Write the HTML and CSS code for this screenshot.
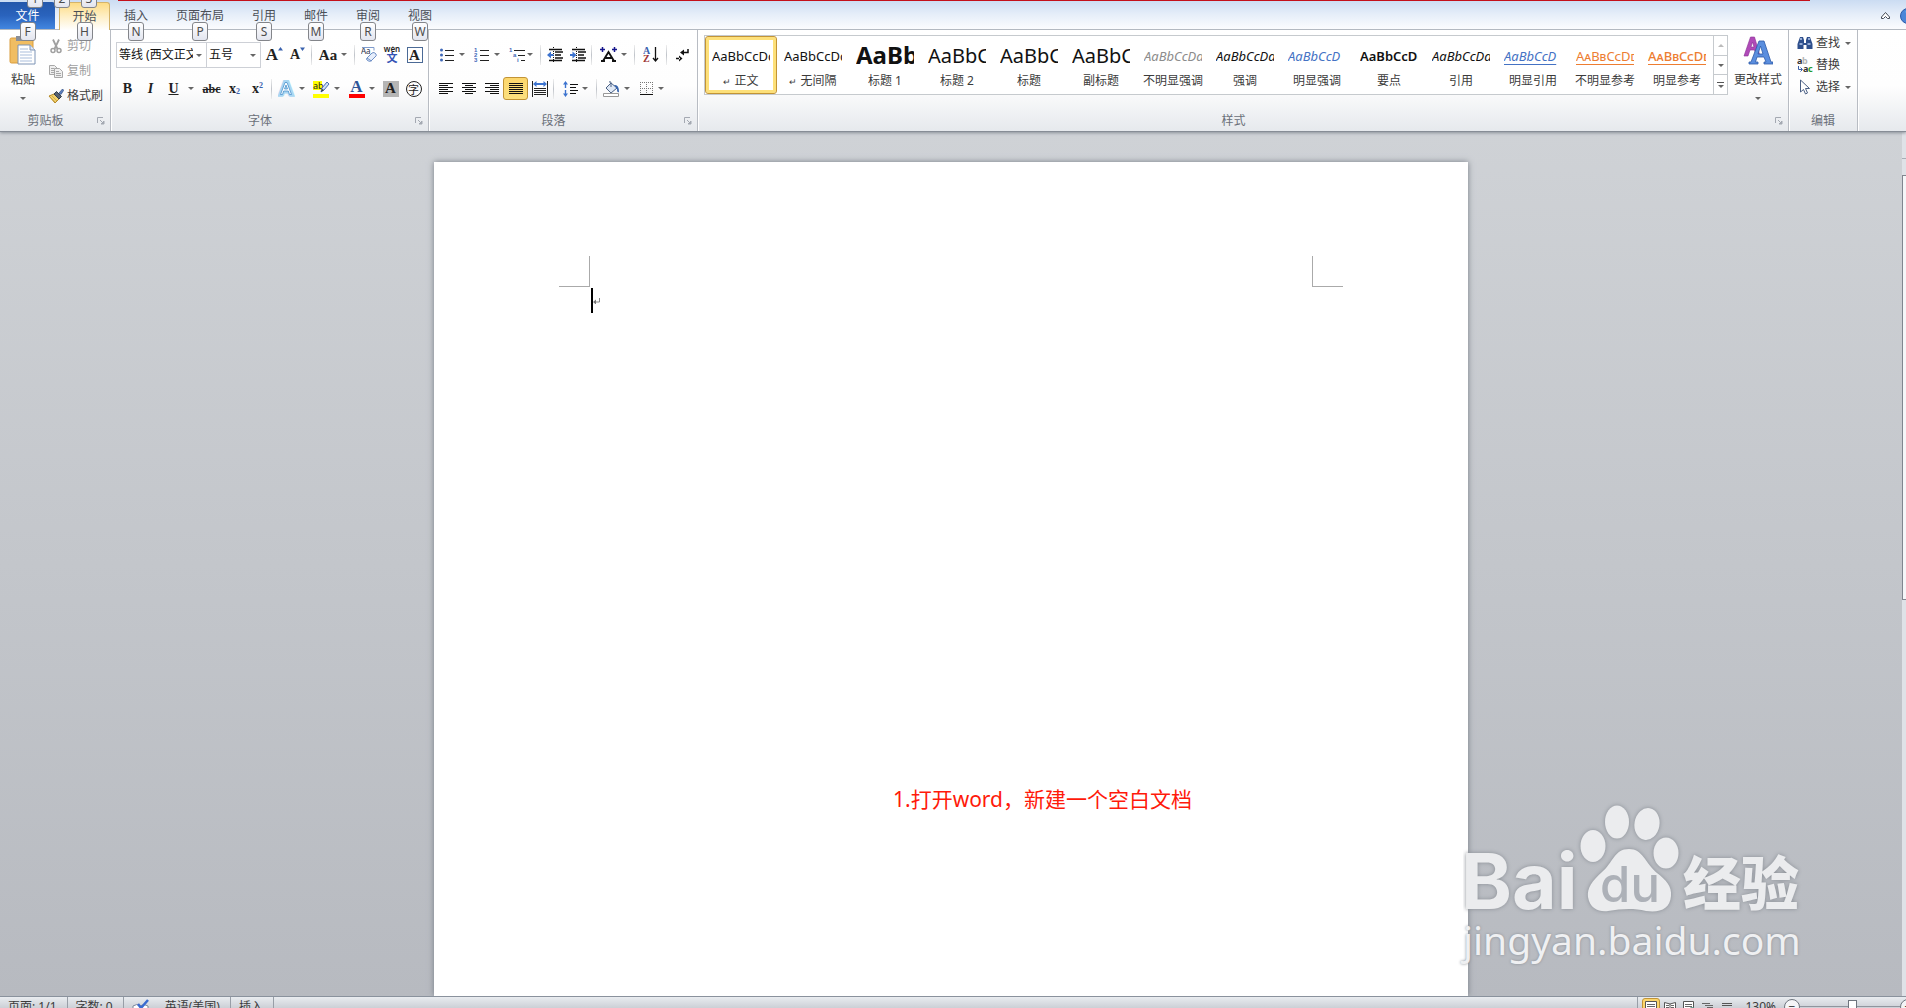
FILE: index.html
```html
<!DOCTYPE html>
<html lang="zh-CN">
<head>
    <meta charset="UTF-8">
    <meta name="viewport" content="width=device-width, initial-scale=1.0">
    <title>文档1 - Microsoft Word</title>
    <link rel="stylesheet" href="styles.css">
</head>
<body>
    <header class="tabs">
        <div class="red-line"></div>
        <div class="quick-keys"><kbd>1</kbd><kbd>2</kbd><kbd>3</kbd></div>
        <nav class="tab-list">
            <button class="tab file">文件<kbd>F</kbd></button>
            <button class="tab active">开始<kbd>H</kbd></button>
            <button class="tab">插入<kbd>N</kbd></button>
            <button class="tab">页面布局<kbd>P</kbd></button>
            <button class="tab">引用<kbd>S</kbd></button>
            <button class="tab">邮件<kbd>M</kbd></button>
            <button class="tab">审阅<kbd>R</kbd></button>
            <button class="tab">视图<kbd>W</kbd></button>
        </nav>
        <div class="window-tools">
            <button class="icon-btn" aria-label="收起功能区">
                <svg width="11" height="9" viewBox="0 0 11 9"><path d="M1.5 6 5.500 1.500 9.500 6v1.500H7.500L5.500 5.500 3.500 7.500h-2z" fill="#fff" stroke="#444a55"/></svg>
            </button>
            <button class="help" aria-label="帮助">?</button>
        </div>
    </header>

    <div class="ribbon">
        <!-- Буфер обмена -->
        <section class="group clipboard">
            <div class="group-body">
                <button class="big-btn">
                    <svg width="28" height="30" viewBox="0 0 28 30">
                        <rect x="1" y="2" width="23" height="25" rx="1.500" fill="#f0bd62" stroke="#d99c3c"/>
                        <path d="M7 0h11v5H7z" fill="#8a8f98"/>
                        <path d="M9 9h12l5 5v14H9z" fill="#fff" stroke="#7c93b5"/>
                        <path d="M21 9v5h5" fill="#dce6f4" stroke="#7c93b5"/>
                        <path d="M11 13h8M11 16h12M11 19h12M11 22h12M11 25h12" stroke="#a9bddb"/>
                    </svg>
                    <span>粘贴</span>
                    <i class="caret"></i>
                </button>
                <div class="stack clip-stack">
                    <button class="text-btn" disabled>
                        <svg width="16" height="16" viewBox="0 0 16 16" fill="none" stroke="#a0a0a0"><path d="M5 1.500 9.500 11M11 1.500 6.500 11" stroke-width="1.800"/><circle cx="5" cy="12.500" r="2" stroke-width="1.500"/><circle cx="11" cy="12.500" r="2" stroke-width="1.500"/></svg>
                        <span>剪切</span>
                    </button>
                    <button class="text-btn" disabled>
                        <svg width="16" height="16" viewBox="0 0 16 16" stroke="#a8a8a8"><path d="M1.500 2.500h5l3 3v6h-8z" fill="#efefef"/><path d="M3 5.500h3M3 7.500h4M3 9.500h4"/><path d="M6.500 5.500h5l3 3v6h-8z" fill="#efefef"/><path d="M8 8.500h3M8 10.500h5M8 12.500h5"/></svg>
                        <span>复制</span>
                    </button>
                    <button class="text-btn">
                        <svg width="16" height="16" viewBox="0 0 16 16"><path d="m1 8 5-2 5 5-4 4z" fill="#f2d16b" stroke="#b58a2a"/><path d="m2 9 5 5M4 8l5 5" stroke="#c79c36" stroke-width=".7"/><path d="m6 6 2.500-2.500 5 5L11 11z" fill="#56616f" stroke="#333d4a"/><path d="m11 5 3.500-4 1.200 1.200L13 6.500z" fill="#5b7fc0" stroke="#2e4a80" stroke-width=".7"/></svg>
                        <span>格式刷</span>
                    </button>
                </div>
            </div>
            <footer class="group-label"><span>剪贴板</span><button class="launcher" aria-label="剪贴板选项"><svg width="8" height="8" viewBox="0 0 8 8"><use href="#launch"/></svg></button></footer>
        </section>

        <!-- Шрифт -->
        <section class="group font">
            <div class="group-body rows">
                <div class="row">
                    <label class="combo name"><select aria-label="字体"><option>等线 (西文正文)</option></select></label>
                    <label class="combo size"><select aria-label="字号"><option>五号</option></select></label>
                    <button class="tool after-combo serif grow" aria-label="增大字体">A<svg width="5" height="4" viewBox="0 0 5 4"><path d="M0 3.500 2.500 0 5 3.500z" fill="#3a62ae"/></svg></button>
                    <button class="tool serif shrink" aria-label="缩小字体">A<svg width="5" height="4" viewBox="0 0 5 4"><path d="M0 .5 2.500 4 5 .5z" fill="#3a62ae"/></svg></button>
                    <i class="sep"></i>
                    <button class="tool split serif case">Aa<i class="caret"></i></button>
                    <i class="sep"></i>
                    <button class="tool" aria-label="清除格式"><svg width="16" height="16" viewBox="0 0 16 16"><text x="0" y="7" font-family="Noto Sans" font-size="8" fill="#26314a">Aa</text><path d="M1 .5h12v3" fill="none" stroke="#7f9bcb"/><path d="m6 11 5-5q2-1.500 4 1 1 2-1 3l-4 4q-2 1-4-1-1-1 0-2z" fill="#e6eefb" stroke="#6e8fc6"/><path d="m6 11 4.500 3" stroke="#6e8fc6"/></svg></button>
                    <button class="tool" aria-label="拼音指南"><svg width="18" height="17" viewBox="0 0 18 17"><text x="9" y="6" text-anchor="middle" font-family="Noto Sans" font-weight="600" font-size="8" fill="#222">wén</text><text x="9" y="16" text-anchor="middle" font-family="Noto Sans CJK SC" font-weight="700" font-size="11" fill="#3453b5">文</text></svg></button>
                    <button class="tool" aria-label="字符边框"><span class="char-border">A</span></button>
                </div>
                <div class="row">
                    <button class="tool serif"><b>B</b></button>
                    <button class="tool serif"><em>I</em></button>
                    <button class="tool split serif underline"><u>U</u><i class="caret"></i></button>
                    <button class="tool serif small"><s>abc</s></button>
                    <button class="tool serif script">x<sub>2</sub></button>
                    <button class="tool serif script">x<sup>2</sup></button>
                    <i class="sep"></i>
                    <button class="tool split" aria-label="文本效果"><svg width="17" height="18" viewBox="0 0 17 18"><text x="8" y="15" text-anchor="middle" font-family="Lato" font-weight="700" font-size="18" fill="#fff" stroke="#a9d6f2" stroke-width="3.500">A</text><path d="M2.500 14.500 7 2.500h2l4.500 12h-2L10.300 11H5.700l-1.200 3.500zM6.500 9h3L8 5z" fill="#fff" stroke="#4a90cc" stroke-width=".8"/></svg><i class="caret"></i></button>
                    <button class="tool split" aria-label="突出显示"><svg width="17" height="18" viewBox="0 0 17 18"><path d="M0 1h9v9H0zM0 14h16v4H0z" fill="#ffff00"/><text x="0" y="9" font-family="Noto Sans" font-size="9" fill="#222">ab</text><path d="m8 12 1-4 5-6 2 2-5 6z" fill="#cfe0f8" stroke="#4a6fb0"/><path d="m8 12 1-3 2 1z" fill="#333"/></svg><i class="caret"></i></button>
                    <button class="tool split" aria-label="字体颜色"><span class="font-color">A</span><i class="caret"></i></button>
                    <button class="tool" aria-label="字符底纹"><span class="char-shade">A</span></button>
                    <button class="tool" aria-label="带圈字符"><span class="char-circle">字</span></button>
                </div>
            </div>
            <footer class="group-label"><span>字体</span><button class="launcher" aria-label="字体选项"><svg width="8" height="8" viewBox="0 0 8 8"><use href="#launch"/></svg></button></footer>
        </section>

        <!-- Абзац -->
        <section class="group paragraph">
            <div class="group-body rows">
                <div class="row">
                    <button class="tool split wide" aria-label="项目符号"><svg width="16" height="16" viewBox="0 0 16 16"><g fill="#3f68b8"><circle cx="2.500" cy="3" r="1.500"/><circle cx="2.500" cy="8" r="1.500"/><circle cx="2.500" cy="13" r="1.500"/></g><path d="M6 3.500h9M6 8.500h9M6 13.500h9" stroke="#222"/></svg><i class="caret"></i></button>
                    <button class="tool split wide" aria-label="编号"><svg width="16" height="16" viewBox="0 0 16 16"><g font-family="Liberation Sans" font-weight="700" font-size="6" fill="#3f68b8"><text x="0" y="5">1</text><text x="0" y="10">2</text><text x="0" y="15">3</text></g><path d="M6 3.500h9M6 8.500h9M6 13.500h9" stroke="#222"/></svg><i class="caret"></i></button>
                    <button class="tool split wide multi" aria-label="多级列表"><svg width="17" height="16" viewBox="0 0 17 16"><g font-family="Liberation Sans" font-weight="700" font-size="6" fill="#3f68b8"><text x="0" y="5">1</text><text x="4" y="10">a</text><text x="8" y="15">i</text></g><path d="M5 3.500h11M9 8.500h7M12 13.500h4" stroke="#222"/></svg><i class="caret"></i></button>
                    <i class="sep"></i>
                    <button class="tool" aria-label="减少缩进"><svg width="16" height="16" viewBox="0 0 16 16"><path d="M2 2.500h13M8 5h8M8 8h6M8 11h8M2 13.500h13" stroke="#111" stroke-width="1.400"/><path d="M6.500 0v16" stroke="#111" stroke-dasharray="1 1"/><path d="m0 8 4-3.500v2.500h2.500v2H4v2.500z" fill="#3c73cf"/></svg></button>
                    <button class="tool" aria-label="增加缩进"><svg width="16" height="16" viewBox="0 0 16 16"><path d="M2 2.500h13M8 5h8M8 8h6M8 11h8M2 13.500h13" stroke="#111" stroke-width="1.400"/><path d="M6.500 0v16" stroke="#111" stroke-dasharray="1 1"/><path d="M6.500 8 2.500 4.500v2.500H0v2h2.500v2.500z" fill="#3c73cf"/></svg></button>
                    <i class="sep"></i>
                    <button class="tool split asian" aria-label="中文版式"><svg width="17" height="16" viewBox="0 0 17 16"><path d="M1 14h4M12 14h4M3 14 8.500 5 14 14M5.500 11h6" fill="none" stroke="#111" stroke-width="1.800"/><path d="M0 2.500h5M2.500 0v5M12 2.500h5M14.500 0v5" stroke="#16168c" stroke-width="1.500"/></svg><i class="caret"></i></button>
                    <i class="sep"></i>
                    <button class="tool sort" aria-label="排序"><svg width="16" height="17" viewBox="0 0 16 17"><g font-family="Liberation Serif" font-weight="700" font-size="10"><text x="0" y="8" fill="#3a62ae">A</text><text x="0" y="16" fill="#9d3434">Z</text></g><path d="M12.500 1v14M10 12l2.500 3 2.500-3" fill="none" stroke="#111" stroke-width="1.300"/></svg></button>
                    <i class="sep"></i>
                    <button class="tool mark" aria-label="显示标记"><svg width="14" height="16" viewBox="0 0 14 16"><path d="M12 2v3.500H7" fill="none" stroke="#111" stroke-width="1.500"/><path d="m4 5.500 4-3v6zM6.500 11.500 3 8.500v6zM0 10.800h4v1.500H0z" fill="#111"/></svg></button>
                </div>
                <div class="row">
                    <button class="tool" aria-label="左对齐"><svg width="14" height="14" viewBox="0 0 14 14"><path d="M0 1.500h14M0 3.500h9M0 5.500h14M0 7.500h9M0 9.500h14M0 11.500h9" stroke="#111"/></svg></button>
                    <button class="tool" aria-label="居中"><svg width="14" height="14" viewBox="0 0 14 14"><path d="M0 1.500h14M3 3.500h8M0 5.500h14M3 7.500h8M0 9.500h14M3 11.500h8" stroke="#111"/></svg></button>
                    <button class="tool" aria-label="右对齐"><svg width="14" height="14" viewBox="0 0 14 14"><path d="M0 1.500h14M5 3.500h9M0 5.500h14M5 7.500h9M0 9.500h14M5 11.500h9" stroke="#111"/></svg></button>
                    <button class="tool pressed" aria-label="两端对齐"><svg width="14" height="14" viewBox="0 0 14 14"><path d="M0 1.500h14M0 3.500h14M0 5.500h14M0 7.500h14M0 9.500h14M0 11.500h14" stroke="#111"/></svg></button>
                    <button class="tool" aria-label="分散对齐"><svg width="16" height="16" viewBox="0 0 16 16"><path d="M.5 0v16M15.500 0v16M2 7.500h12M2 9.500h12M2 11.500h12M2 13.500h12" stroke="#222"/><path d="m1 3 3.500-3v2h7V0L15 3l-3.500 3V4h-7v2z" fill="#3c73cf"/></svg></button>
                    <i class="sep"></i>
                    <button class="tool split spacing" aria-label="行距"><svg width="16" height="16" viewBox="0 0 16 16"><path d="M7 3.500h8M7 6.500h6M7 9.500h8M7 12.500h6" stroke="#111"/><path d="m2.500 0 2.500 3.500H3.200V7H1.800V3.500H0zM2.500 16 0 12.500h1.800V9h1.400v3.500H5z" fill="#3c73cf"/></svg><i class="caret"></i></button>
                    <i class="sep"></i>
                    <button class="tool split" aria-label="底纹"><svg width="17" height="16" viewBox="0 0 17 16"><path d="m3 7 5-5 6 5-6 5z" fill="#dfe8f5" stroke="#4c6285"/><path d="M8 6V2q0-2-2-1" fill="none" stroke="#4c6285"/><path d="M11 4q5-1 5 7-2 1-2-3z" fill="#3563ad"/><path d="M.5 12.500h15v3H.5z" fill="#fff" stroke="#999"/></svg><i class="caret"></i></button>
                    <button class="tool split" aria-label="边框"><svg width="14" height="14" viewBox="0 0 14 14"><path d="M.5 0v13M6.500 0v13M12.500 0v13M0 .5h13M0 6.500h13" stroke="#777" stroke-dasharray="1 1"/><path d="M0 12.500h13" stroke="#111"/></svg><i class="caret"></i></button>
                </div>
            </div>
            <footer class="group-label"><span>段落</span><button class="launcher" aria-label="段落选项"><svg width="8" height="8" viewBox="0 0 8 8"><use href="#launch"/></svg></button></footer>
        </section>

        <!-- Стили -->
        <section class="group styles">
            <div class="group-body">
                <div class="gallery">
                    <button class="style selected"><span class="sample">AaBbCcDd</span><span class="name"><small>↵</small> 正文</span></button>
                    <button class="style"><span class="sample">AaBbCcDd</span><span class="name"><small>↵</small> 无间隔</span></button>
                    <button class="style"><span class="sample h1">AaBb</span><span class="name">标题 1</span></button>
                    <button class="style"><span class="sample h2">AaBbC</span><span class="name">标题 2</span></button>
                    <button class="style"><span class="sample h2">AaBbC</span><span class="name">标题</span></button>
                    <button class="style"><span class="sample h2">AaBbC</span><span class="name">副标题</span></button>
                    <button class="style"><span class="sample italic gray">AaBbCcDd</span><span class="name">不明显强调</span></button>
                    <button class="style"><span class="sample italic">AaBbCcDd</span><span class="name">强调</span></button>
                    <button class="style"><span class="sample italic blue">AaBbCcD</span><span class="name">明显强调</span></button>
                    <button class="style"><span class="sample strong">AaBbCcDd</span><span class="name">要点</span></button>
                    <button class="style"><span class="sample italic">AaBbCcDd</span><span class="name">引用</span></button>
                    <button class="style"><span class="sample italic blue lined">AaBbCcD</span><span class="name">明显引用</span></button>
                    <button class="style"><span class="sample caps lined">AaBbCcDd</span><span class="name">不明显参考</span></button>
                    <button class="style"><span class="sample caps lined heavy">AaBbCcDd</span><span class="name">明显参考</span></button>
                    <div class="gallery-scroll">
                        <button class="dim" aria-label="上一行"><i class="caret up"></i></button>
                        <button aria-label="下一行"><i class="caret"></i></button>
                        <button class="more" aria-label="更多"><i class="caret"></i></button>
                    </div>
                </div>
                <button class="big-btn change">
                    <svg width="30" height="30" viewBox="0 0 30 30">
                        <path d="M1 20 7.500 1h4L17 20h-3.500l-2-6H7l-2 6zM8 11h3L9.500 6z" fill="#b04ab8" stroke="#8a2f94" stroke-width=".6"/>
                        <path d="M6 28v-2h2L16 5h5l7 21h2v2h-9v-2h2l-2-5h-7l-1.500 5H15v2zM15 18h5l-2.500-8z" fill="#5a8ede" stroke="#2d5ba8" stroke-width=".8"/>
                    </svg>
                    <span>更改样式</span>
                    <i class="caret"></i>
                </button>
            </div>
            <footer class="group-label"><span>样式</span><button class="launcher" aria-label="样式选项"><svg width="8" height="8" viewBox="0 0 8 8"><use href="#launch"/></svg></button></footer>
        </section>

        <!-- Правка -->
        <section class="group edit">
            <div class="group-body">
                <div class="stack edit-stack">
                    <button class="text-btn">
                        <svg width="16" height="16" viewBox="0 0 16 16"><path d="M3 2h3l1 3v3h2V5l1-3h3l2.500 7v5h-6v-4h-3v4h-6V9z" fill="#2e4f8c"/><path d="M2.500 9h3M10.500 9h3M4 3v2M12 3v2" stroke="#b9cdf0" stroke-width="1.500"/></svg>
                        <span>查找</span><i class="caret"></i>
                    </button>
                    <button class="text-btn">
                        <svg width="16" height="16" viewBox="0 0 16 16"><g font-family="Noto Sans" font-weight="700" font-size="9"><text x="0" y="7" fill="#333">a</text><text x="5" y="7" fill="#b5b5b5">b</text><text x="6" y="15" fill="#333">a</text><text x="11" y="15" fill="#239a2c">c</text></g><path d="M1.500 9v3.500H5M3.500 10.500l2 2-2 2" fill="none" stroke="#3a5fa8"/></svg>
                        <span>替换</span>
                    </button>
                    <button class="text-btn">
                        <svg width="16" height="16" viewBox="0 0 16 16"><path d="M3.500 1v12l3-2.500 2 4.500 2-1-2-4.500h4z" fill="#fff" stroke="#4a5f84"/></svg>
                        <span>选择</span><i class="caret"></i>
                    </button>
                </div>
            </div>
            <footer class="group-label"><span>编辑</span></footer>
        </section>
    </div>

    <div class="workspace">
        <main class="desk">
            <article class="page">
                <div class="margins"><i class="corner left"></i><i class="corner right"></i></div>
                <div class="line"><i class="cursor"></i><svg width="7" height="6" viewBox="0 0 7 6"><path d="M6.500 0v4H2" fill="none" stroke="#888"/><path d="M0 4 3 1.500v5z" fill="#777"/></svg></div>
                <p class="note">1.打开word，新建一个空白文档</p>
            </article>
            <div class="watermark">
                <svg width="350" height="115" viewBox="0 0 350 115">
                    <g class="mark-shape">
                        <text x="-2" y="109" font-family="Inter" font-weight="700" font-size="77">Bai</text>
                        <ellipse cx="130" cy="46" rx="12.500" ry="16"/>
                        <ellipse cx="154" cy="22" rx="12" ry="16.500"/>
                        <ellipse cx="184" cy="24" rx="12.500" ry="16" transform="rotate(10 184 24)"/>
                        <ellipse cx="203" cy="53" rx="12.500" ry="15.500"/>
                        <path d="M166 49c-15 0-16 14-27 23-10 9-15 16-14 25 2 12 11 15 20 14 13-2 25-3 38 0 14 2 24-2 25-15 1-10-5-16-14-23-12-10-14-24-28-24z"/>
                        <text x="220" y="105" font-family="Noto Sans CJK SC" font-weight="900" font-size="58">经验</text>
                    </g>
                    <text class="mark-du" x="167" y="102" text-anchor="middle" font-family="Inter" font-weight="500" font-size="49">du</text>
                </svg>
                <div class="mark-url">jingyan.baidu.com</div>
            </div>
        </main>
        <div class="scrollbar"><i class="split-box"></i><i class="thumb"></i></div>
    </div>

    <footer class="status">
        <div class="status-inner">
            <span class="cell">页面: 1/1</span>
            <span class="cell">字数: 0</span>
            <span class="cell proof">
                <svg width="18" height="16" viewBox="0 0 18 16"><path d="M1 7q4-3 7 0 4-3 8 0v7q-4-2-8 0-3-2-7 0z" fill="#fff" stroke="#7a869a"/><path d="m6 5 3 4 7-8" fill="none" stroke="#3a6bd0" stroke-width="2.500"/></svg>
                <span>英语(美国)</span>
            </span>
            <span class="cell">插入</span>
            <div class="views">
                <button class="view on" aria-label="页面视图"><svg width="12" height="12" viewBox="0 0 12 12"><path d="M.5.5h11v11H.5z" fill="#fff" stroke="#555"/><path d="M2 3.500h8M2 5.500h8M2 7.500h8M2 9.500h8" stroke="#666"/></svg></button>
                <button class="view" aria-label="阅读版式"><svg width="12" height="12" viewBox="0 0 12 12"><path d="M.5 1.500 6 3l5.500-1.500v9L6 11.500.5 10.500zM6 3v8" fill="#fff" stroke="#555"/><path d="M2 4.500h3M7 4.500h3M2 6.500h3M7 6.500h3" stroke="#666"/></svg></button>
                <button class="view" aria-label="Web 版式"><svg width="12" height="12" viewBox="0 0 12 12"><path d="M.5.500h10v10H.5z" fill="#fff" stroke="#555"/><path d="M2 3.500h7M2 5.500h7M2 7.500h4" stroke="#666"/><circle cx="9" cy="8.500" r="2.500" fill="#5f9a8c"/></svg></button>
                <button class="view" aria-label="大纲"><svg width="12" height="12" viewBox="0 0 12 12"><path d="M0 2.500h8M3 4.500h8M5 6.500h6M5 8.500h6" stroke="#666"/></svg></button>
                <button class="view" aria-label="草稿"><svg width="12" height="12" viewBox="0 0 12 12"><path d="M1 2.500h10M1 4.500h10M1 7.500h10M1 9.500h10" stroke="#555"/></svg></button>
            </div>
            <div class="zoom">
                <span>130%</span>
                <button class="round" aria-label="缩小">−</button>
                <input type="range" min="0" max="100" value="53" aria-label="缩放">
                <button class="round" aria-label="放大">+</button>
            </div>
        </div>
    </footer>

    <svg class="defs" width="0" height="0">
        <symbol id="launch" viewBox="0 0 8 8"><path d="M.5 6V.5H6" fill="none" stroke="#a4a9b2"/><path d="M3 3l2.500 2.500M7 4v3H4z" fill="#a4a9b2" stroke="#a4a9b2"/></symbol>
    </svg>
</body>
</html>
```
FILE: styles.css
```css
* {
    box-sizing: border-box;
}

body {
    display: flex;
    flex-direction: column;
    height: 100vh;
    margin: 0;
    overflow: hidden;
    font-family: "Noto Sans", "Noto Sans CJK SC", sans-serif;
    font-size: 12px;
    line-height: 16px;
    color: #3b3b3b;
}

button,
select {
    font: inherit;
    color: inherit;
    background: none;
    border: none;
    padding: 0;
    margin: 0;
}

svg {
    display: block;
    flex: none;
}

.defs {
    position: absolute;
}

.caret {
    flex: none;
    width: 0;
    height: 0;
    border: 3px solid transparent;
    border-top-color: #666;
    border-bottom-width: 0;
}

.caret.up {
    border-top-width: 0;
    border-bottom: 3px solid #bbb;
}

/* Вкладки */
.tabs {
    position: relative;
    z-index: 2;
    flex: none;
    display: flex;
    height: 30px;
    border-bottom: 1px solid #b3b9c1;
    background: linear-gradient(180deg, #cbdcf2, #e6eef9 50%, #fbfcfe);
}

.red-line {
    position: absolute;
    top: 0;
    left: 118px;
    right: 96px;
    height: 1px;
    background: #c4101a;
}

kbd {
    position: absolute;
    z-index: 2;
    width: 16px;
    height: 19px;
    border: 1px solid #83858a;
    border-radius: 3px;
    background: linear-gradient(180deg, #fff, #e3e5ef);
    color: #4c4c4c;
    font-family: "Noto Sans", sans-serif;
    font-size: 12px;
    line-height: 17px;
    text-align: center;
}

.quick-keys kbd {
    top: -11px;
    left: 27px;
}

.quick-keys kbd:nth-child(2) {
    left: 54px;
}

.quick-keys kbd:nth-child(3) {
    left: 81px;
}

.tab-list {
    display: flex;
    padding-top: 2px;
}

.tab {
    position: relative;
    height: 27px;
    padding: 0 14px;
    color: #4a4f57;
}

.tab kbd {
    top: 20px;
    left: calc(50% - 8px);
}

.tab.file {
    width: 55px;
    margin-right: 4px;
    border-radius: 0 3px 0 0;
    background: linear-gradient(180deg, #2458ab, #2a63bd 50%, #4286e0);
    color: #fff;
}

.tab.active {
    width: 51px;
    height: 28px;
    padding: 0;
    border: 1px solid #d5b46a;
    border-bottom: none;
    border-radius: 3px 3px 0 0;
    background: linear-gradient(180deg, #fddc86, #feefc6 50%, #fff);
}

.tab.active kbd {
    top: 19px;
}

.window-tools {
    display: flex;
    align-items: center;
    gap: 9px;
    margin-left: auto;
    margin-right: -10px;
    padding-top: 2px;
}

.help {
    width: 16px;
    height: 16px;
    border: 1px solid #2c5ba8;
    border-radius: 50%;
    background: #4c86d8;
    color: #fff;
    line-height: 14px;
}

/* Лента */
.ribbon {
    position: relative;
    z-index: 1;
    flex: none;
    display: flex;
    height: 102px;
    border-bottom: 1px solid #878d96;
    background: linear-gradient(180deg, #fff, #fefefe 55%, #e6e9ed);
    box-shadow: 0 1px 3px #8a9099;
}

.group {
    display: flex;
    flex-direction: column;
    border-right: 1px solid #b8bcc3;
    box-shadow: 1px 0 #fff;
}

.clipboard {
    width: 111px;
}

.font {
    width: 318px;
}

.paragraph {
    width: 269px;
}

.styles {
    flex: 1;
    min-width: 0;
}

.edit {
    width: 69px;
    margin-right: 48px;
}

.group-body {
    flex: 1;
    display: flex;
}

.group-label {
    display: flex;
    align-items: center;
    height: 20px;
    color: #6a7079;
    text-align: center;
}

.group-label span {
    flex: 1;
}

.launcher {
    width: 19px;
    padding-left: 6px;
}

.big-btn {
    display: flex;
    flex-direction: column;
    align-items: center;
    gap: 6px;
    width: 42px;
    padding: 6px 0 0 4px;
}

.big-btn .caret {
    margin-top: 3px;
}

.stack {
    display: flex;
    flex-direction: column;
}

.clip-stack {
    gap: 9px;
    padding: 8px 0 0 6px;
}

.edit-stack {
    gap: 6px;
    padding: 5px 0 0 8px;
}

.text-btn {
    display: flex;
    align-items: center;
    gap: 3px;
    height: 16px;
}

.text-btn .caret {
    margin-left: 2px;
}

.text-btn:disabled {
    color: #a0a0a0;
}

.rows {
    flex-direction: column;
    gap: 9px;
    padding: 12px 0 0 5px;
}

.row {
    display: flex;
    align-items: center;
    height: 25px;
}

.combo {
    position: relative;
    height: 26px;
    border: 1px solid #cdd0d6;
    background: #fff;
}

.combo::after {
    content: "";
    position: absolute;
    top: 11px;
    right: 4px;
    border: 3px solid transparent;
    border-top-color: #666;
    border-bottom-width: 0;
}

.combo select {
    appearance: none;
    width: 100%;
    height: 24px;
    padding: 0 13px 0 2px;
    color: #111;
    overflow: hidden;
}

.combo.name {
    width: 91px;
}

.combo.size {
    width: 54px;
    border-left: none;
}

.tool {
    display: flex;
    align-items: center;
    justify-content: center;
    width: 23px;
    height: 23px;
    color: #222;
}

.tool.split {
    width: 35px;
    gap: 4px;
}

.sep {
    flex: none;
    width: 1px;
    height: 20px;
    margin: 0 2px;
    background: linear-gradient(180deg, #eee, #c0c4ca, #eee);
}

.serif {
    font-family: "Liberation Serif", serif;
    font-weight: 700;
    font-size: 14px;
}

.after-combo {
    margin-left: 2px;
}

.grow {
    font-size: 17px;
}

.grow svg,
.shrink svg {
    align-self: flex-start;
    margin-top: 4px;
}

.tool.case {
    width: 38px;
    font-size: 15px;
}

.tool.underline {
    width: 38px;
    gap: 9px;
}

.small {
    font-size: 12px;
}

.script sub,
.script sup {
    font-size: 8px;
    line-height: 8px;
    color: #3a62ae;
}

.script sub {
    padding-top: 6px;
}

.script sup {
    padding-bottom: 6px;
}

.char-border,
.char-shade,
.char-circle,
.font-color {
    width: 16px;
    height: 16px;
    font-family: "Liberation Serif", serif;
    font-weight: 700;
    font-size: 15px;
    line-height: 15px;
}

.char-border {
    border: 1px solid #4b6a96;
    line-height: 14px;
}

.char-shade {
    background: #b5b5b5;
}

.char-circle {
    border: 1px solid #222;
    border-radius: 50%;
    font-family: "Noto Sans CJK SC", sans-serif;
    font-weight: 400;
    font-size: 11px;
    line-height: 14px;
}

.font-color {
    height: 18px;
    border-bottom: 4px solid #f00;
    color: #2f5597;
    font-size: 17px;
    line-height: 13px;
}

.paragraph .multi {
    width: 34px;
    gap: 1px;
}

.paragraph .asian {
    width: 38px;
}

.paragraph .spacing {
    width: 38px;
    gap: 3px;
}

.tool.sort,
.tool.mark {
    width: 27px;
}

.tool.pressed {
    width: 25px;
    border: 1px solid #c29436;
    border-radius: 3px;
    background: linear-gradient(180deg, #fcd66c, #fbe07f);
}

/* Галерея стилей */
.gallery {
    display: flex;
    flex: 1;
    height: 60px;
    margin: 5px 0 0 6px;
    border: 1px solid #c6cace;
    background: #fff;
    overflow: hidden;
}

.style {
    flex: 1;
    display: flex;
    flex-direction: column;
    align-items: center;
    min-width: 0;
    padding: 4px 4px 0;
    border: 2px solid transparent;
}

.style.selected {
    border: 1px solid #c29436;
    border-radius: 3px;
    box-shadow: inset 0 0 0 3px #fde07a;
    padding: 5px 5px 0;
}

.sample {
    width: 58px;
    height: 31px;
    overflow: hidden;
    white-space: nowrap;
    text-align: left;
    font-size: 13px;
    line-height: 28px;
    color: #111;
}

.sample.h1 {
    font-size: 24px;
    font-weight: 700;
    line-height: 26px;
}

.sample.h2 {
    font-size: 20px;
    line-height: 28px;
}

.sample.strong {
    font-weight: 600;
}

.sample.italic {
    font-style: italic;
}

.sample.gray {
    color: #8c8c8c;
}

.sample.blue {
    color: #4472c4;
}

.sample.caps {
    font-variant: small-caps;
    color: #ed7d31;
}

.sample.lined {
    text-decoration: underline;
    text-underline-offset: 3px;
}

.sample.heavy {
    font-weight: 500;
}

.style .name {
    white-space: nowrap;
}

.name small {
    font-size: 9px;
}

.gallery-scroll {
    display: flex;
    flex-direction: column;
    width: 14px;
    border-left: 1px solid #c6cace;
}

.gallery-scroll button {
    flex: 1;
    display: flex;
    flex-direction: column;
    align-items: center;
    justify-content: center;
    gap: 2px;
    border-bottom: 1px solid #c6cace;
}

.gallery-scroll button:last-child {
    border-bottom: none;
}

.gallery-scroll .more::before {
    content: "";
    width: 7px;
    height: 1px;
    background: #555;
}

.big-btn.change {
    width: 60px;
    padding: 6px 0 0;
}

/* Документ */
.workspace {
    flex: 1;
    display: flex;
    min-height: 0;
}

.desk {
    position: relative;
    flex: 1;
    display: flex;
    justify-content: center;
    padding-top: 30px;
    background: linear-gradient(180deg, #cfd2d6, #b7bac0);
    overflow: hidden;
}

.page {
    width: 1034px;
    padding-top: 94px;
    background: #fff;
    box-shadow: 0 0 6px #757c85;
}

.margins {
    display: flex;
    justify-content: space-between;
    padding: 0 125px;
}

.corner {
    width: 31px;
    height: 31px;
    border-bottom: 1px solid #aaa;
}

.corner.left {
    border-right: 1px solid #aaa;
}

.corner.right {
    border-left: 1px solid #aaa;
}

.line {
    display: flex;
    align-items: center;
    gap: 0;
    margin: 1px 157px 0;
}

.cursor {
    width: 2px;
    height: 25px;
    background: #000;
}

.note {
    margin: 470px 0 0 459px;
    font-size: 21px;
    line-height: 32px;
    color: #ff1a0a;
}

.watermark {
    position: absolute;
    right: 101px;
    bottom: 31px;
    width: 350px;
    color: #eff0f2;
}

.watermark svg {
    margin-left: 12px;
}

.mark-shape {
    fill: #ebecee;
    filter: drop-shadow(0 0 2px #888d94);
}

.mark-du {
    fill: #adb1b8;
}

.mark-url {
    padding-left: 12px;
    font-size: 39px;
    line-height: 50px;
    text-shadow: 0 0 3px #888d94;
}

.scrollbar {
    flex: none;
    display: flex;
    flex-direction: column;
    gap: 16px;
    width: 4px;
    background: #dfe2e7;
}

.split-box {
    height: 27px;
    border-bottom: 1px solid #a8adb5;
}

.thumb {
    height: 425px;
    border: 1px solid #80868f;
    border-right: none;
    background: #f5f6f8;
}

/* Строка состояния */
.status {
    flex: none;
    height: 12px;
    overflow: hidden;
    border-top: 1px solid #8a929d;
    background: linear-gradient(180deg, #e9ecf0, #ccd0d6);
}

.status-inner {
    display: flex;
    align-items: center;
    height: 20px;
    margin-right: -10px;
}

.cell {
    display: flex;
    align-items: center;
    height: 20px;
    padding: 0 10px 0 8px;
    border-right: 1px solid #989ea7;
    white-space: nowrap;
}

.cell.proof {
    gap: 15px;
}

.views {
    display: flex;
    align-items: center;
    gap: 1px;
    height: 20px;
    margin-left: auto;
    padding-left: 4px;
    border-left: 1px solid #989ea7;
}

.view {
    display: flex;
    align-items: center;
    justify-content: center;
    width: 18px;
    height: 18px;
}

.view.on {
    border: 1px solid #c29436;
    border-radius: 3px;
    background: #fcd66c;
}

.zoom {
    display: flex;
    align-items: center;
    gap: 8px;
    padding-left: 9px;
}

.round {
    width: 16px;
    height: 16px;
    border: 1px solid #6f757e;
    border-radius: 50%;
    background: #f4f5f7;
    line-height: 12px;
}

.zoom input {
    appearance: none;
    width: 100px;
    height: 16px;
    margin: 0 -8px;
    background: linear-gradient(180deg, transparent 7px, #8f959e 7px, #8f959e 8px, transparent 8px);
}

.zoom input::-webkit-slider-thumb {
    appearance: none;
    width: 9px;
    height: 15px;
    border: 1px solid #6f757e;
    background: #fff;
}
```
